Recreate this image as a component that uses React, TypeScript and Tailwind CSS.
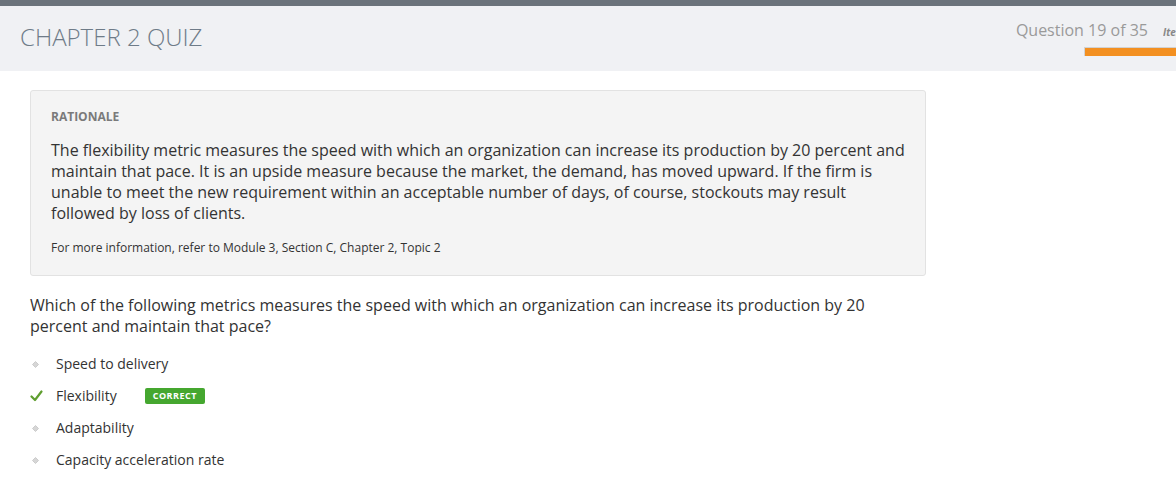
const options = [
  { label: "Speed to delivery", correct: false },
  { label: "Flexibility", correct: true },
  { label: "Adaptability", correct: false },
  { label: "Capacity acceleration rate", correct: false },
];

function Bullet() {
  return (
    <svg width="7" height="7" viewBox="0 0 7 7" className="block">
      <path d="M3.5 0.5 L6.5 3.5 L3.5 6.5 L0.5 3.5 Z" fill="#d6d6d6" stroke="#c4c4c4" strokeWidth="0.8" />
    </svg>
  );
}

function Check() {
  return (
    <svg width="13" height="12" viewBox="0 0 13 12" className="block">
      <path d="M1.5 6.5 L5 10 L11.5 1.5" fill="none" stroke="#5f9e2f" strokeWidth="2.2" strokeLinecap="round" strokeLinejoin="round" />
    </svg>
  );
}

export default function App() {
  return (
    <div className="w-[1176px] h-[489px] overflow-hidden bg-white font-['Open_Sans',sans-serif]">
      <div className="h-[6px] bg-[#6b737b]" />
      <header className="h-[65px] bg-[#f0f1f4] flex justify-between">
        <h1 className="pl-5 pt-[15px] text-[24px] leading-[32px] font-light text-[#6e7b88] tracking-[0px]">
          CHAPTER 2 QUIZ
        </h1>
        <div className="flex flex-col items-end pt-[13px]">
          <div className="flex items-baseline gap-[15px] whitespace-nowrap">
            <span className="text-[16px] leading-[22px] text-[#9a9a9a]">Question 19 of 35</span>
            <span className="text-[10px] font-bold italic text-[#888] w-[13px] overflow-hidden">Item</span>
          </div>
          <div className="mt-[6px] w-[92px] h-[9px] border-t border-l border-[#d2d2d2] bg-[#f39021]" />
        </div>
      </header>

      <main className="pl-[30px] pt-[19px]">
        <section className="w-[896px] bg-[#f4f4f4] border border-[#e2e2e2] rounded-[3px] px-5 pt-[17px] pb-[18px]">
          <h2 className="text-[12px] leading-[18px] font-bold text-[#7a7a7a]">RATIONALE</h2>
          <p className="mt-[14px] text-[16px] leading-[21px] text-[#333]">
            The flexibility metric measures the speed with which an organization can increase its production by 20 percent and
            maintain that pace. It is an upside measure because the market, the demand, has moved upward. If the firm is
            unable to meet the new requirement within an acceptable number of days, of course, stockouts may result
            followed by loss of clients.
          </p>
          <p className="mt-[15px] text-[12px] leading-[18px] text-[#333]">
            For more information, refer to Module 3, Section C, Chapter 2, Topic 2
          </p>
        </section>

        <p className="mt-[19px] w-[860px] text-[16px] leading-[21px] text-[#333]">
          Which of the following metrics measures the speed with which an organization can increase its production by 20
          percent and maintain that pace?
        </p>

        <ul className="mt-[11px] flex flex-col">
          {options.map((o) => (
            <li key={o.label} className="h-[32px] flex items-center">
              <span className="w-[26px] flex justify-start">
                {o.correct ? <Check /> : <span className="pl-[2px]"><Bullet /></span>}
              </span>
              <span className="text-[14px] leading-[20px] text-[#333]">{o.label}</span>
              {o.correct && (
                <span className="ml-[28px] h-[16px] px-[8px] rounded-[2px] bg-[#45a72f] text-white text-[9px] font-bold tracking-[0.5px] leading-[16px]">
                  CORRECT
                </span>
              )}
            </li>
          ))}
        </ul>
      </main>
    </div>
  );
}
